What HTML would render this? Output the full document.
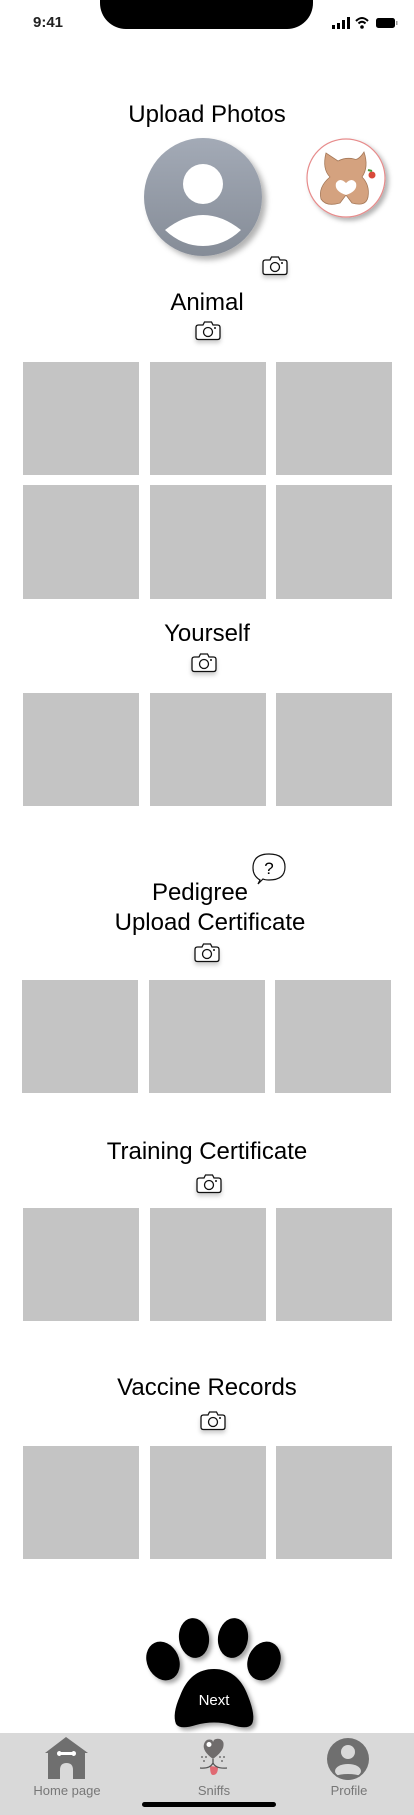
<!DOCTYPE html>
<html><head><meta charset="utf-8">
<style>
*{margin:0;padding:0;box-sizing:border-box}
body{width:414px;height:1815px;background:#fff;position:relative;overflow:hidden;font-family:"Liberation Sans",sans-serif;color:#000}
.a{position:absolute}
.t{position:absolute;left:0;width:414px;text-align:center;font-size:24px;line-height:28px}
.g{position:absolute;background:#c4c4c4;width:116px;height:113px}
.cam{position:absolute;width:26px;height:21px;filter:drop-shadow(0 3px 2px rgba(0,0,0,.2))}
.lbl{position:absolute;font-size:13px;color:#777;text-align:center;width:100px;top:1783px}
</style></head><body>
<div class="a" style="left:33px;top:14px;font-size:15px;font-weight:bold;color:#222">9:41</div>
<div class="a" style="left:100px;top:0;width:213px;height:29px;background:#000;border-radius:0 0 26px 26px"></div>
<svg class="a" style="left:331px;top:16px" width="68" height="14" viewBox="0 0 68 14">
<rect x="1" y="9" width="3" height="4" fill="#000"/><rect x="6" y="7" width="3" height="6"/><rect x="11" y="4" width="3" height="9"/><rect x="16" y="1" width="3" height="12"/>
<path d="M25 5 Q31 -1 37 5 M27.5 7.5 Q31 4 34.5 7.5" stroke="#000" stroke-width="2" fill="none"/><circle cx="31" cy="11" r="1.8"/>
<rect x="45" y="2" width="19" height="10" rx="2.5" fill="#000"/><rect x="65" y="5" width="1.5" height="4" fill="#999"/>
</svg>

<div class="t" style="top:101px">Upload Photos</div>
<svg class="a" style="left:140px;top:134px;overflow:visible" width="126" height="126" viewBox="0 0 126 126">
<defs><linearGradient id="ag" x1="0" y1="0" x2="0" y2="1"><stop offset="0" stop-color="#a3aab6"/><stop offset="1" stop-color="#858c97"/></linearGradient>
<filter id="sh" x="-20%" y="-20%" width="150%" height="150%"><feDropShadow dx="4" dy="4" stdDeviation="3" flood-opacity=".3"/></filter></defs>
<circle cx="63" cy="63" r="59" fill="url(#ag)" filter="url(#sh)"/>
<circle cx="63" cy="50" r="20" fill="#fff"/>
<path d="M25 96 Q63 66 101 96 Q84 112 63 112 Q42 112 25 96Z" fill="#fff"/>
</svg>
<svg class="a" style="left:304px;top:137px;overflow:visible" width="84" height="84" viewBox="0 0 84 84">
<defs><filter id="sh2" x="-20%" y="-20%" width="150%" height="150%"><feDropShadow dx="3" dy="3" stdDeviation="2.5" flood-opacity=".3"/></filter></defs>
<circle cx="42" cy="41" r="39" fill="#fff" stroke="#e78c8c" stroke-width="1.2" filter="url(#sh2)"/>
<path d="M22 16 Q18 32 26 40 Q14 50 17 62 Q22 70 36 66 L42 58 L48 66 Q62 70 64 60 Q66 48 58 40 Q65 30 60 15 Q54 24 50 22 Q42 20 34 24 Q28 20 22 16Z" fill="#d4a27f" stroke="#a57858" stroke-width=".8"/>
<path d="M42 46 Q36 40 32 46 Q30 54 42 58 Q54 54 52 46 Q48 40 42 46Z" fill="#fff"/>
<circle cx="68" cy="38" r="3.5" fill="#d84a3a"/><path d="M64 33 L68 34" stroke="#4a9a3a" stroke-width="2"/>
</svg>

<svg class="cam" style="left:262px;top:255px" viewBox="0 0 26 21"><path d="M3.5 5 H8 L9.5 2 H16.5 L18 5 H22.5 Q25 5 25 7.5 V17 Q25 19.5 22.5 19.5 H3.5 Q1 19.5 1 17 V7.5 Q1 5 3.5 5Z" fill="#fff" stroke="#111" stroke-width="1.3"/><circle cx="13" cy="12" r="4.5" fill="none" stroke="#111" stroke-width="1.3"/><circle cx="20" cy="8" r="1" fill="#111"/></svg>

<div class="t" style="top:289px">Animal</div>
<svg class="cam" style="left:195px;top:320px" viewBox="0 0 26 21"><path d="M3.5 5 H8 L9.5 2 H16.5 L18 5 H22.5 Q25 5 25 7.5 V17 Q25 19.5 22.5 19.5 H3.5 Q1 19.5 1 17 V7.5 Q1 5 3.5 5Z" fill="#fff" stroke="#111" stroke-width="1.3"/><circle cx="13" cy="12" r="4.5" fill="none" stroke="#111" stroke-width="1.3"/><circle cx="20" cy="8" r="1" fill="#111"/></svg>
<div class="g" style="left:23px;top:362px"></div><div class="g" style="left:150px;top:362px"></div><div class="g" style="left:276px;top:362px"></div>
<div class="g" style="left:23px;top:485px;height:114px"></div><div class="g" style="left:150px;top:485px;height:114px"></div><div class="g" style="left:276px;top:485px;height:114px"></div>

<div class="t" style="top:620px">Yourself</div>
<svg class="cam" style="left:191px;top:652px" viewBox="0 0 26 21"><path d="M3.5 5 H8 L9.5 2 H16.5 L18 5 H22.5 Q25 5 25 7.5 V17 Q25 19.5 22.5 19.5 H3.5 Q1 19.5 1 17 V7.5 Q1 5 3.5 5Z" fill="#fff" stroke="#111" stroke-width="1.3"/><circle cx="13" cy="12" r="4.5" fill="none" stroke="#111" stroke-width="1.3"/><circle cx="20" cy="8" r="1" fill="#111"/></svg>
<div class="g" style="left:23px;top:693px"></div><div class="g" style="left:150px;top:693px"></div><div class="g" style="left:276px;top:693px"></div>

<svg class="a" style="left:251px;top:852px" width="36" height="34" viewBox="0 0 36 34"><path d="M9 28 Q2 24 2 16 Q2 2 18 2 Q34 2 34 15 Q34 28 18 28 Q14 28 12 27 L7 32 Z" fill="#fff" stroke="#111" stroke-width="1.2"/><text x="18" y="22" font-size="17" text-anchor="middle" font-family="Liberation Sans">?</text></svg>
<div class="t" style="top:879px;left:-7px">Pedigree</div>
<div class="t" style="top:909px;left:3px">Upload Certificate</div>
<svg class="cam" style="left:194px;top:942px" viewBox="0 0 26 21"><path d="M3.5 5 H8 L9.5 2 H16.5 L18 5 H22.5 Q25 5 25 7.5 V17 Q25 19.5 22.5 19.5 H3.5 Q1 19.5 1 17 V7.5 Q1 5 3.5 5Z" fill="#fff" stroke="#111" stroke-width="1.3"/><circle cx="13" cy="12" r="4.5" fill="none" stroke="#111" stroke-width="1.3"/><circle cx="20" cy="8" r="1" fill="#111"/></svg>
<div class="g" style="left:22px;top:980px"></div><div class="g" style="left:149px;top:980px"></div><div class="g" style="left:275px;top:980px"></div>

<div class="t" style="top:1138px">Training Certificate</div>
<svg class="cam" style="left:196px;top:1173px" viewBox="0 0 26 21"><path d="M3.5 5 H8 L9.5 2 H16.5 L18 5 H22.5 Q25 5 25 7.5 V17 Q25 19.5 22.5 19.5 H3.5 Q1 19.5 1 17 V7.5 Q1 5 3.5 5Z" fill="#fff" stroke="#111" stroke-width="1.3"/><circle cx="13" cy="12" r="4.5" fill="none" stroke="#111" stroke-width="1.3"/><circle cx="20" cy="8" r="1" fill="#111"/></svg>
<div class="g" style="left:23px;top:1208px"></div><div class="g" style="left:150px;top:1208px"></div><div class="g" style="left:276px;top:1208px"></div>

<div class="t" style="top:1374px">Vaccine Records</div>
<svg class="cam" style="left:200px;top:1410px" viewBox="0 0 26 21"><path d="M3.5 5 H8 L9.5 2 H16.5 L18 5 H22.5 Q25 5 25 7.5 V17 Q25 19.5 22.5 19.5 H3.5 Q1 19.5 1 17 V7.5 Q1 5 3.5 5Z" fill="#fff" stroke="#111" stroke-width="1.3"/><circle cx="13" cy="12" r="4.5" fill="none" stroke="#111" stroke-width="1.3"/><circle cx="20" cy="8" r="1" fill="#111"/></svg>
<div class="g" style="left:23px;top:1446px"></div><div class="g" style="left:150px;top:1446px"></div><div class="g" style="left:276px;top:1446px"></div>

<svg class="a" style="left:140px;top:1610px;overflow:visible" width="150" height="125" viewBox="140 1610 150 125">
<defs><filter id="sh3" x="-20%" y="-20%" width="150%" height="150%"><feDropShadow dx="3" dy="3" stdDeviation="2" flood-opacity=".35"/></filter></defs>
<g filter="url(#sh3)" fill="#000">
<ellipse cx="163" cy="1661" rx="16" ry="20" transform="rotate(-25 163 1661)"/>
<ellipse cx="194" cy="1638" rx="15" ry="20" transform="rotate(-8 194 1638)"/>
<ellipse cx="233" cy="1638" rx="15" ry="20" transform="rotate(8 233 1638)"/>
<ellipse cx="264" cy="1661" rx="16" ry="20" transform="rotate(25 264 1661)"/>
<path d="M214 1669 Q238 1669 248 1696 Q256 1716 252 1724 Q248 1730 232 1725 Q214 1720 196 1725 Q180 1730 176 1724 Q172 1714 180 1696 Q190 1669 214 1669Z"/>
</g>
<text x="214" y="1705" fill="#fff" font-size="15" text-anchor="middle" font-family="Liberation Sans">Next</text>
</svg>

<div class="a" style="left:0;top:1733px;width:414px;height:82px;background:#d9d9d9"></div>
<svg class="a" style="left:44px;top:1736px" width="46" height="44" viewBox="0 0 46 44">
<path d="M22 1 L44 17 H41 V43 H4 V17 H1 Z" fill="#6f6f6f"/>
<path d="M16 43 V34 Q16 27 22.5 27 Q29 27 29 34 V43Z" fill="#d9d9d9"/>
<path d="M16 15 Q13 15 13 17.5 Q13 20 16 20 L17 19 H28 L29 20 Q32 20 32 17.5 Q32 15 29 15 L28 16 H17Z" fill="#fff"/>
</svg>
<svg class="a" style="left:190px;top:1735px" width="46" height="44" viewBox="0 0 46 44">
<path d="M23 24 Q12 16 14 9 Q16 3 22 5 Q23 6 23 7 Q24 3 30 4 Q35 6 33 13 Q31 18 23 24Z" fill="#6f6c6c"/>
<circle cx="19" cy="9.5" r="2.5" fill="#fff"/>
<path d="M20 31 Q20 40 23 40 Q28 40 28 32Z" fill="#e06a73"/>
<path d="M23 24 V28 Q20 34 10 33 M23 28 Q26 34 37 33" stroke="#555" stroke-width="1.3" fill="none"/>
<circle cx="12" cy="22" r=".9" fill="#555"/><circle cx="16" cy="22" r=".9" fill="#555"/><circle cx="14" cy="26" r=".9" fill="#555"/>
<circle cx="30" cy="22" r=".9" fill="#555"/><circle cx="34" cy="22" r=".9" fill="#555"/><circle cx="32" cy="26" r=".9" fill="#555"/>
</svg>
<svg class="a" style="left:327px;top:1738px" width="42" height="42" viewBox="0 0 42 42">
<defs><clipPath id="pc"><circle cx="21" cy="21" r="21"/></clipPath></defs>
<circle cx="21" cy="21" r="21" fill="#6f6f6f"/>
<circle cx="21" cy="14" r="7" fill="#d9d9d9"/>
<ellipse cx="21" cy="33" rx="13" ry="7" fill="#d9d9d9"/>
<ellipse cx="21" cy="44" rx="20" ry="8" fill="#6f6f6f" clip-path="url(#pc)"/>
</svg>
<div class="lbl" style="left:17px">Home page</div>
<div class="lbl" style="left:164px">Sniffs</div>
<div class="lbl" style="left:299px">Profile</div>
<div class="a" style="left:142px;top:1802px;width:134px;height:5px;border-radius:3px;background:#000"></div>
</body></html>
